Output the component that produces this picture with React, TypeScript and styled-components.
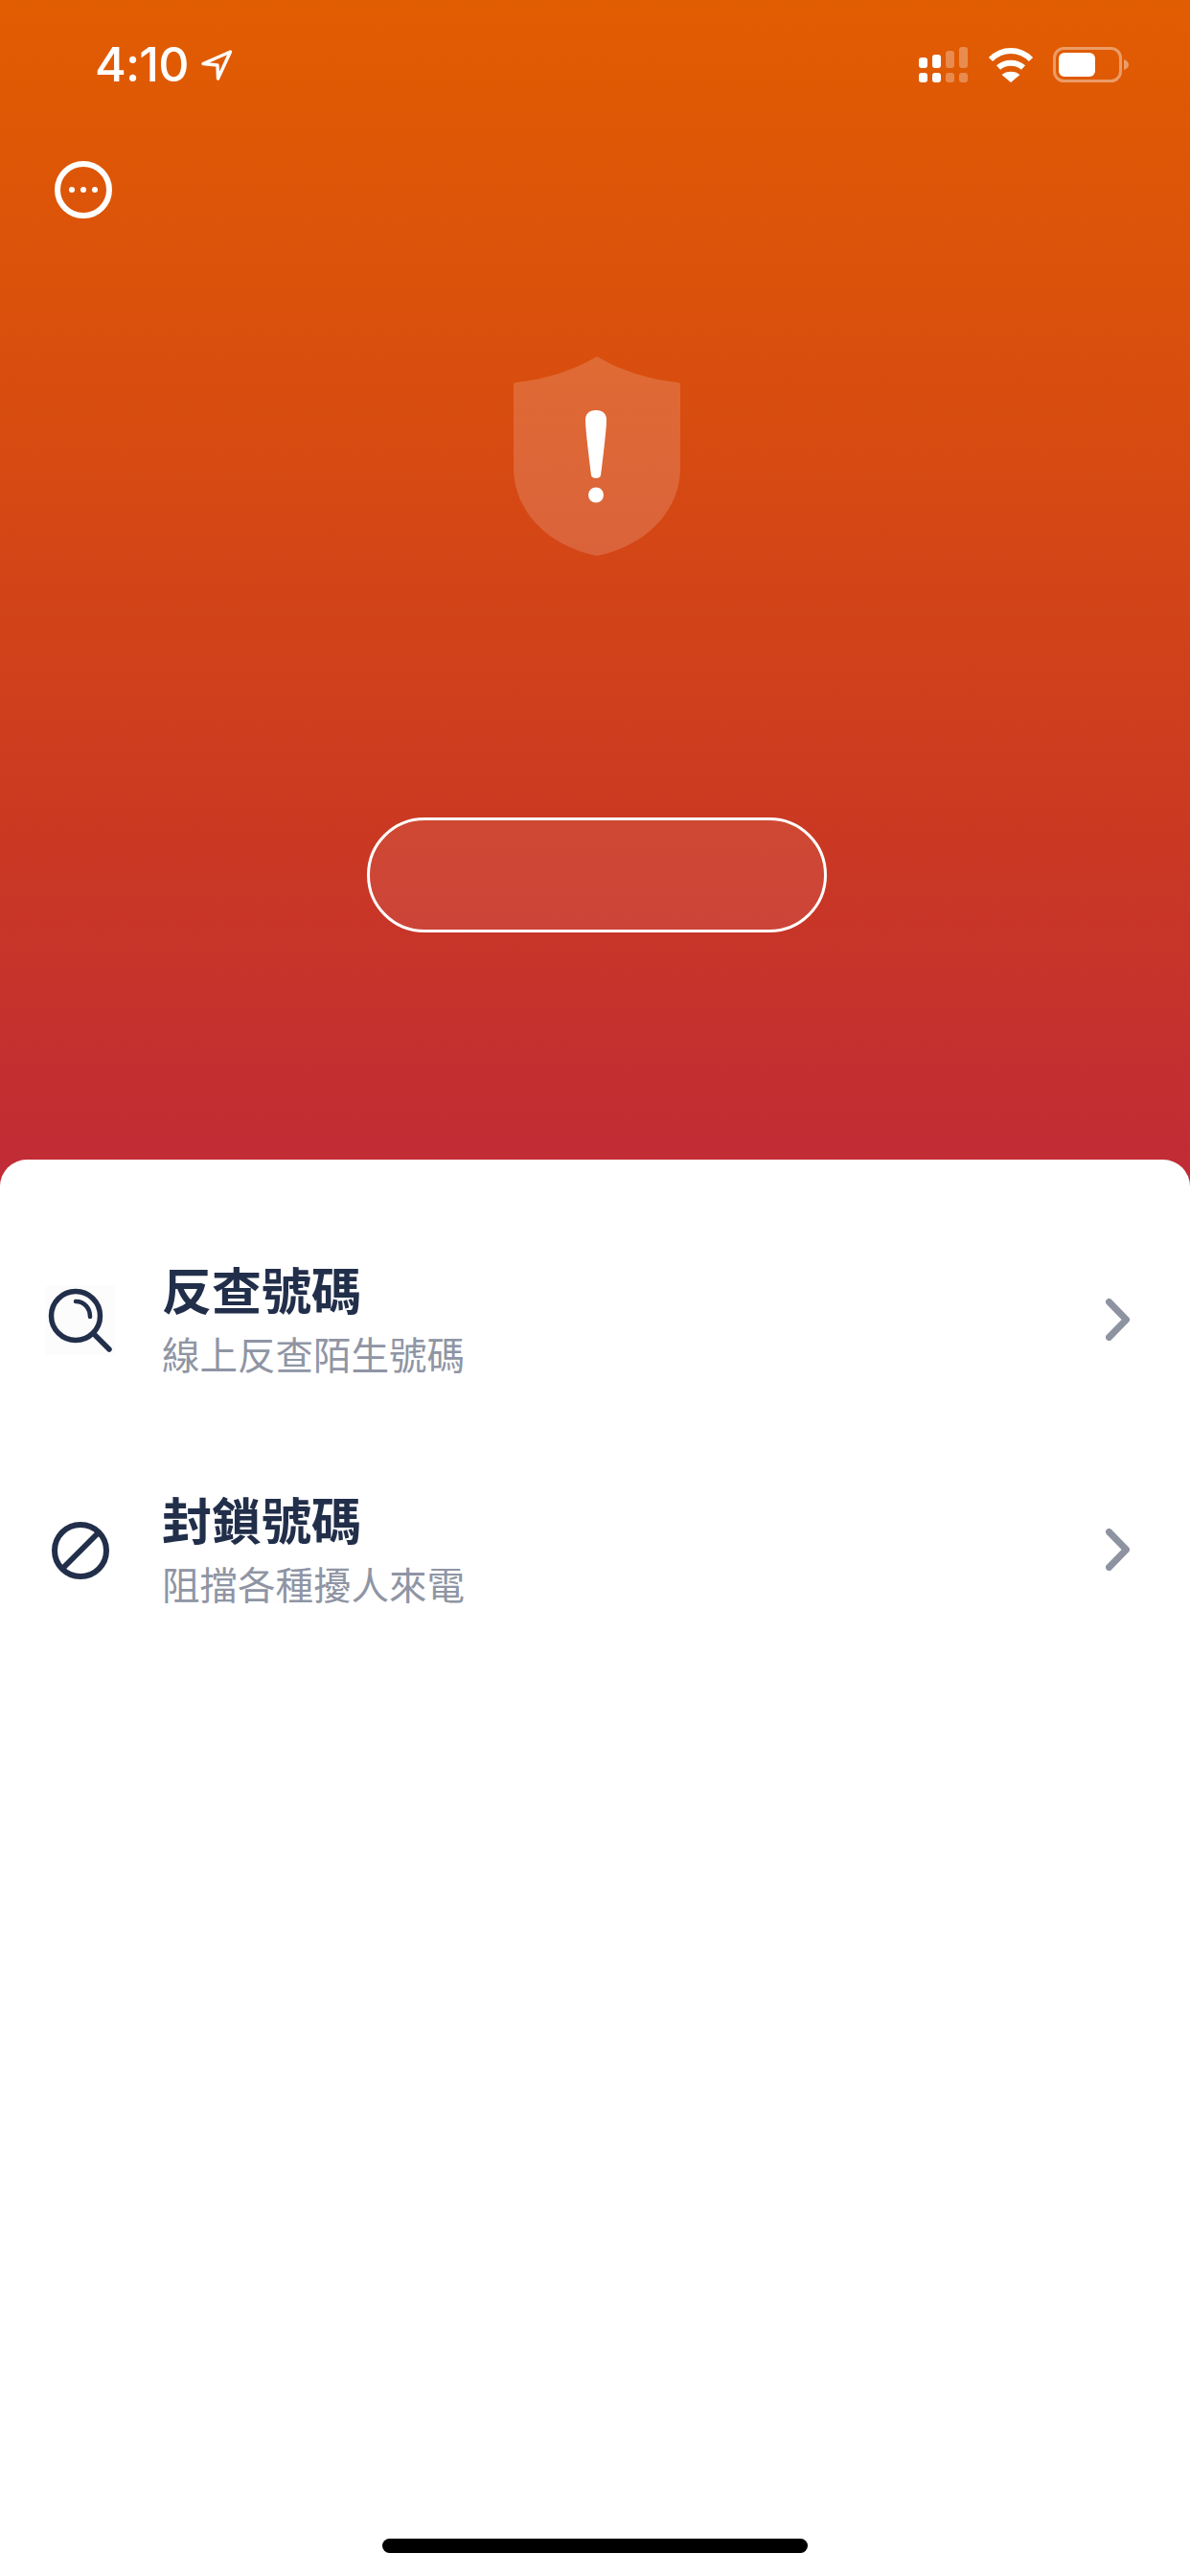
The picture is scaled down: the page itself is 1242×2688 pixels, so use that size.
import styled, { createGlobalStyle } from "styled-components";

const GlobalStyle = createGlobalStyle`
  html, body {
    margin: 0;
    padding: 0;
    background: #ffffff;
  }
`

const Screen = styled.div`
  width: 1242px;
  height: 2688px;
  display: flex;
  flex-direction: column;
  overflow: hidden;
  background: linear-gradient(180deg, #e15d01 0px, #d84c10 440px, #cb3922 860px, #c02b37 1240px) no-repeat;
  background-size: 100% 1240px;
  font-family: "Noto Sans CJK TC", "Noto Sans", sans-serif;
`

const StatusBar = styled.div`
  height: 136px;
  box-sizing: border-box;
  padding: 49px 64px 0 99px;
  display: flex;
  justify-content: space-between;
  align-items: flex-start;
`

const TimeGroup = styled.div`
  display: flex;
  align-items: center;
  gap: 12px;
  height: 37px;
`

const Clock = styled.span`
  font-family: Inter, "Liberation Sans", sans-serif;
  font-size: 50px;
  font-weight: 500;
  line-height: 37px;
  letter-spacing: -0.8px;
  color: #ffffff;
`

const StatusIcons = styled.div`
  display: flex;
  align-items: flex-start;
  gap: 20px;
`

const MoreRow = styled.div`
  padding: 32px 0 0 57px;
  height: 60px;
  display: flex;
`

const Hero = styled.div`
  height: 982px;
  box-sizing: border-box;
  padding-left: 4px;
  display: flex;
  flex-direction: column;
  align-items: center;
`

const ShieldWrap = styled.div`
  margin-top: 144px;
  width: 174px;
  height: 208px;
`

const CheckButton = styled.button`
  margin-top: 273px;
  width: 480px;
  height: 120px;
  padding: 0;
  box-sizing: border-box;
  border: 3px solid #ffffff;
  border-radius: 60px;
  background: rgba(255, 255, 255, 0.08);
`

const Sheet = styled.div`
  flex: 1;
  background: #ffffff;
  border-radius: 28px 28px 0 0;
  padding-top: 100px;
  display: flex;
  flex-direction: column;
`

const Row = styled.div`
  height: 240px;
  box-sizing: border-box;
  padding: 5px 62px 0 48px;
  display: flex;
  align-items: flex-start;
`

const IconBox = styled.div<{ $tinted?: boolean }>`
  width: 72px;
  height: 72px;
  margin-top: 27px;
  flex-shrink: 0;
  background: ${(p) => (p.$tinted ? "#fcfcfc" : "transparent")};
`

const RowText = styled.div`
  margin-left: 49px;
  flex: 1;
  display: flex;
  flex-direction: column;
  gap: 12px;
`

const RowTitle = styled.div`
  font-size: 52px;
  font-weight: 700;
  line-height: 60px;
  color: #222f4a;
`

const RowSub = styled.div`
  font-size: 39.5px;
  font-weight: 400;
  line-height: 50px;
  color: #8f95a4;
`

const Chevron = styled.div`
  width: 26px;
  height: 44px;
  margin-top: 40px;
`

const HomeBar = styled.div`
  margin: auto auto 24px;
  width: 444px;
  height: 15px;
  border-radius: 8px;
  background: #000000;
`

function LocationArrow() {
  return (
    <svg width="34" height="34" viewBox="0 0 34 34" fill="none">
      <path d="M31.5 3 L3 15.5 L18 17 L18.5 31 Z" stroke="#fff" strokeWidth="3.4" strokeLinejoin="round" />
    </svg>
  )
}

function SignalIcon() {
  return (
    <svg width="52" height="37" viewBox="0 0 52 37" fill="#fff">
      <rect x="0" y="11" width="9" height="11" rx="3" />
      <rect x="14" y="8" width="9" height="14" rx="3" />
      <rect x="28" y="4" width="9" height="18" rx="3" opacity="0.3" />
      <rect x="42" y="0" width="9" height="22" rx="3" opacity="0.3" />
      <rect x="0" y="27" width="9" height="10" rx="3" />
      <rect x="14" y="27" width="9" height="10" rx="3" />
      <rect x="28" y="27" width="9" height="10" rx="3" opacity="0.3" />
      <rect x="42" y="27" width="9" height="10" rx="3" opacity="0.3" />
    </svg>
  )
}

function WifiIcon() {
  return (
    <svg width="48" height="37" viewBox="0 0 48 37" fill="none" stroke="#fff">
      <path d="M3 13 C15 1 33 1 45 13" strokeWidth="6" />
      <path d="M11 21.5 C18 15 30 15 37 21.5" strokeWidth="6" />
      <path d="M24 37 L14.5 29 C19 24.5 29 24.5 33.5 29 Z" fill="#fff" stroke="none" />
    </svg>
  )
}

function BatteryIcon() {
  return (
    <svg width="79" height="37" viewBox="0 0 79 37" fill="none">
      <rect x="1.5" y="1.5" width="69" height="34" rx="10" stroke="#fff" strokeOpacity="0.4" strokeWidth="3" />
      <rect x="6" y="6" width="38" height="25" rx="6" fill="#fff" />
      <path d="M74 13 C77 14 79 16 79 18.5 C79 21 77 23 74 24 Z" fill="#fff" fillOpacity="0.4" />
    </svg>
  )
}

function MoreIcon() {
  return (
    <svg width="60" height="60" viewBox="0 0 60 60" fill="none">
      <circle cx="30" cy="30" r="27" stroke="#fff" strokeWidth="6" />
      <circle cx="18" cy="30" r="3" fill="#fff" />
      <circle cx="30" cy="30" r="3" fill="#fff" />
      <circle cx="42" cy="30" r="3" fill="#fff" />
    </svg>
  )
}

function ShieldIcon() {
  return (
    <svg width="174" height="208" viewBox="0 0 174 208">
      <path
        d="M87 0 C62 15 32 24 3 27 C1 27 0 28 0 30 L0 116 C0 162 37 198 87 208 C137 198 174 162 174 116 L174 30 C174 28 173 27 171 27 C142 24 112 15 87 0 Z"
        fill="#ffffff"
        fillOpacity="0.16"
      />
      <path
        d="M75 66 C75 60 79 56 86 56 C93 56 97 60 97 66 C97 76 93 108 91 124 C90.5 128 81.5 128 81 124 C79 108 75 76 75 66 Z"
        fill="#ffffff"
      />
      <circle cx="86" cy="144.5" r="8" fill="#ffffff" />
    </svg>
  )
}

function SearchIcon() {
  return (
    <svg width="72" height="72" viewBox="0 0 72 72" fill="none" stroke="#222f4a" strokeLinecap="round">
      <circle cx="31" cy="31" r="25.5" strokeWidth="5.5" />
      <path d="M50 50 L66 66" strokeWidth="5.5" />
      <path d="M31 16 C40 16 46 23 46 32" strokeWidth="4.5" />
    </svg>
  )
}

function BlockIcon() {
  return (
    <svg width="72" height="72" viewBox="0 0 72 72" fill="none" stroke="#222f4a" strokeWidth="6">
      <circle cx="36" cy="36" r="27" />
      <path d="M17 55 L55 17" />
    </svg>
  )
}

function ChevronIcon() {
  return (
    <svg width="26" height="44" viewBox="0 0 26 44" fill="none">
      <path d="M3.5 3.5 L21.5 22 L3.5 40.5" stroke="#8e93a2" strokeWidth="7" strokeLinecap="round" strokeLinejoin="round" />
    </svg>
  )
}

const rows = [
  { title: "反查號碼", sub: "線上反查陌生號碼", icon: <SearchIcon />, tinted: true },
  { title: "封鎖號碼", sub: "阻擋各種擾人來電", icon: <BlockIcon />, tinted: false },
]

export default function App() {
  return (
    <Screen>
      <GlobalStyle />
      <StatusBar>
        <TimeGroup>
          <Clock>4:10</Clock>
          <LocationArrow />
        </TimeGroup>
        <StatusIcons>
          <SignalIcon />
          <WifiIcon />
          <BatteryIcon />
        </StatusIcons>
      </StatusBar>
      <MoreRow>
        <MoreIcon />
      </MoreRow>
      <Hero>
        <ShieldWrap>
          <ShieldIcon />
        </ShieldWrap>
        <CheckButton />
      </Hero>
      <Sheet>
        {rows.map((row) => (
          <Row key={row.title}>
            <IconBox $tinted={row.tinted}>{row.icon}</IconBox>
            <RowText>
              <RowTitle>{row.title}</RowTitle>
              <RowSub>{row.sub}</RowSub>
            </RowText>
            <Chevron>
              <ChevronIcon />
            </Chevron>
          </Row>
        ))}
        <HomeBar />
      </Sheet>
    </Screen>
  )
}
